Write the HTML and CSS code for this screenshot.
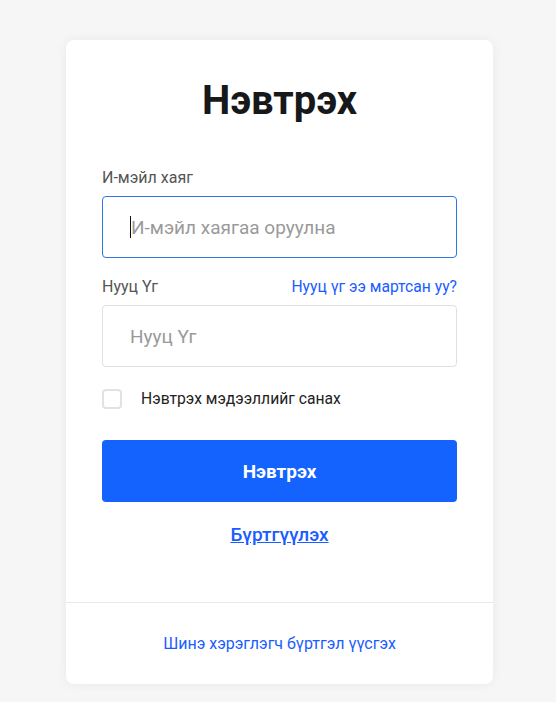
FILE: index.html
```html
<!DOCTYPE html>
<html lang="mn">
<head>
<meta charset="utf-8">
<title>Нэвтрэх</title>
<link rel="stylesheet" href="styles.css">
</head>
<body>
<div class="page">
  <div class="card">
    <div class="card-body">
      <h1 class="title">Нэвтрэх</h1>
      <div class="field field-email">
        <label class="label">И-мэйл хаяг</label>
        <div class="input focused"><span class="caret"></span><span class="ph">И-мэйл хаягаа оруулна</span></div>
      </div>
      <div class="field">
        <div class="label-row">
          <label class="label">Нууц Үг</label>
          <a class="forgot" href="#">Нууц үг ээ мартсан уу?</a>
        </div>
        <div class="input"><span class="ph">Нууц Үг</span></div>
      </div>
      <div class="remember">
        <span class="checkbox"></span>
        <span class="remember-text">Нэвтрэх мэдээллийг санах</span>
      </div>
      <button class="btn">Нэвтрэх</button>
      <div class="register"><a href="#">Бүртгүүлэх</a></div>
    </div>
    <div class="card-footer">
      <a href="#">Шинэ хэрэглэгч бүртгэл үүсгэх</a>
    </div>
  </div>
</div>
</body>
</html>
```
FILE: styles.css
```css
* { box-sizing: border-box; }
html, body { margin: 0; padding: 0; }
body {
  background: #f6f6f6;
  font-family: Roboto, "Liberation Sans", Arial, sans-serif;
  width: 556px;
  height: 702px;
  overflow: hidden;
}
.page {
  padding: 40px 63px 0 66px;
}
.card {
  background: #fff;
  border-radius: 8px;
  box-shadow: 0 0 12px rgba(0,0,0,0.06);
}
.card-body {
  padding: 34px 36px 55px;
}
.title {
  margin: 0 0 40px;
  text-align: center;
  font-size: 40px;
  line-height: 54px;
  font-weight: 700;
  color: #17181a;
}
.field { margin-bottom: 22px; }
.field-email { margin-bottom: 19px; }
.label {
  display: block;
  font-size: 16px;
  line-height: 20px;
  color: #555;
  margin-bottom: 8px;
}
.label-row {
  display: flex;
  justify-content: space-between;
  align-items: baseline;
}
.forgot {
  font-size: 15.7px;
  line-height: 20px;
  color: #1a5cff;
  text-decoration: none;
}
.input {
  height: 62px;
  border: 1px solid #e0e0e0;
  border-radius: 4px;
  display: flex;
  align-items: center;
  padding-left: 27px;
  font-size: 19px;
}
.input.focused { border-color: #2f74e8; }
.caret {
  width: 1px;
  height: 22px;
  background: #111;
}
.ph { color: #9a9a9a; }
.remember {
  display: flex;
  align-items: center;
  height: 20px;
}
.checkbox {
  width: 20px;
  height: 20px;
  border: 2px solid #e2e2e2;
  border-radius: 4px;
  margin-right: 19px;
}
.remember-text {
  font-size: 15.7px;
  line-height: 20px;
  color: #222;
}
.btn {
  display: block;
  width: 100%;
  height: 62px;
  margin-top: 31px;
  border: 0;
  border-radius: 4px;
  background: #1463ff;
  color: #fff;
  font-family: inherit;
  font-size: 19px;
  font-weight: 700;
}
.register {
  text-align: center;
  margin-top: 21px;
  font-size: 19px;
  line-height: 24px;
}
.register a {
  color: #1a5cff;
  font-weight: 500;
  text-decoration: underline;
}
.card-footer {
  border-top: 1px solid #e8e8e8;
  height: 82px;
  display: flex;
  align-items: center;
  justify-content: center;
}
.card-footer a {
  color: #1a5cff;
  font-size: 16px;
  text-decoration: none;
}
```
